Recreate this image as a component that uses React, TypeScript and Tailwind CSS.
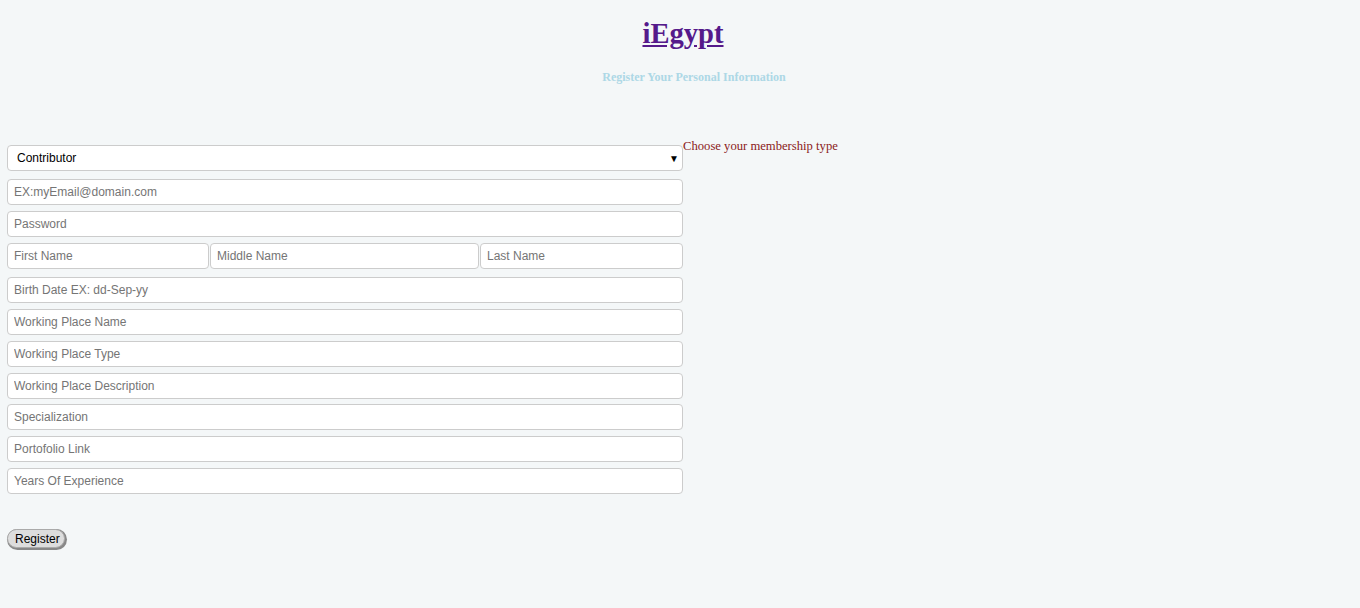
const inputCls =
  "block w-full h-[26px] px-[6px] bg-white border border-[#cccccc] rounded-[4px] text-[12px] text-black placeholder:text-[#757575] outline-none font-['Liberation_Sans',Arial,sans-serif]";

export default function App() {
  return (
    <div className="min-h-[608px] w-full bg-[#f4f7f8] font-['Liberation_Serif','Times_New_Roman',serif]">
      <div className="pt-[17px] text-center">
        <a href="#" className="inline-block ml-[6px] text-[28.6px] font-bold leading-[34px] text-[#551a8b] underline">
          iEgypt
        </a>
        <div className="mt-[19px] pl-[28px] text-[12px] font-bold leading-[14px] text-[#add8e6]">
          Register Your Personal Information
        </div>
      </div>
      <div className="mt-[55px] flex items-start px-[7px]">
        <form className="w-[676px] font-['Liberation_Sans',Arial,sans-serif]">
          <div className="relative mt-[6px]">
            <select className="block w-full h-[26px] appearance-none pl-[9px] bg-white border border-[#cccccc] rounded-[4px] text-[12px] text-black outline-none">
              <option>Contributor</option>
            </select>
            <span className="pointer-events-none absolute right-[4px] top-[6px] text-[10px] text-black">▼</span>
          </div>
          <input className={`${inputCls} mt-[8px]`} placeholder="EX:myEmail@domain.com" />
          <input className={`${inputCls} mt-[6px]`} type="password" placeholder="Password" />
          <div className="mt-[6px] flex gap-[1px]">
            <input className={`${inputCls} !w-[202px]`} placeholder="First Name" />
            <input className={`${inputCls} !w-[269px]`} placeholder="Middle Name" />
            <input className={`${inputCls} !w-[203px]`} placeholder="Last Name" />
          </div>
          <input className={`${inputCls} mt-[8px]`} placeholder="Birth Date EX: dd-Sep-yy" />
          <input className={`${inputCls} mt-[6px]`} placeholder="Working Place Name" />
          <input className={`${inputCls} mt-[6px]`} placeholder="Working Place Type" />
          <input className={`${inputCls} mt-[6px]`} placeholder="Working Place Description" />
          <input className={`${inputCls} mt-[5px]`} placeholder="Specialization" />
          <input className={`${inputCls} mt-[6px]`} placeholder="Portofolio Link" />
          <input className={`${inputCls} mt-[6px]`} placeholder="Years Of Experience" />
          <button
            type="button"
            className="mt-[35px] h-[19px] pl-[7px] pr-[4px] rounded-full bg-[#dddddd] border border-[#aaaaaa] shadow-[1px_1px_0_1px_#888888] text-[12px] leading-[16px] text-black"
          >
            Register
          </button>
        </form>
        <div className="text-[12.65px] leading-[14px] text-[#8b1a1a]">Choose your membership type</div>
      </div>
    </div>
  );
}
